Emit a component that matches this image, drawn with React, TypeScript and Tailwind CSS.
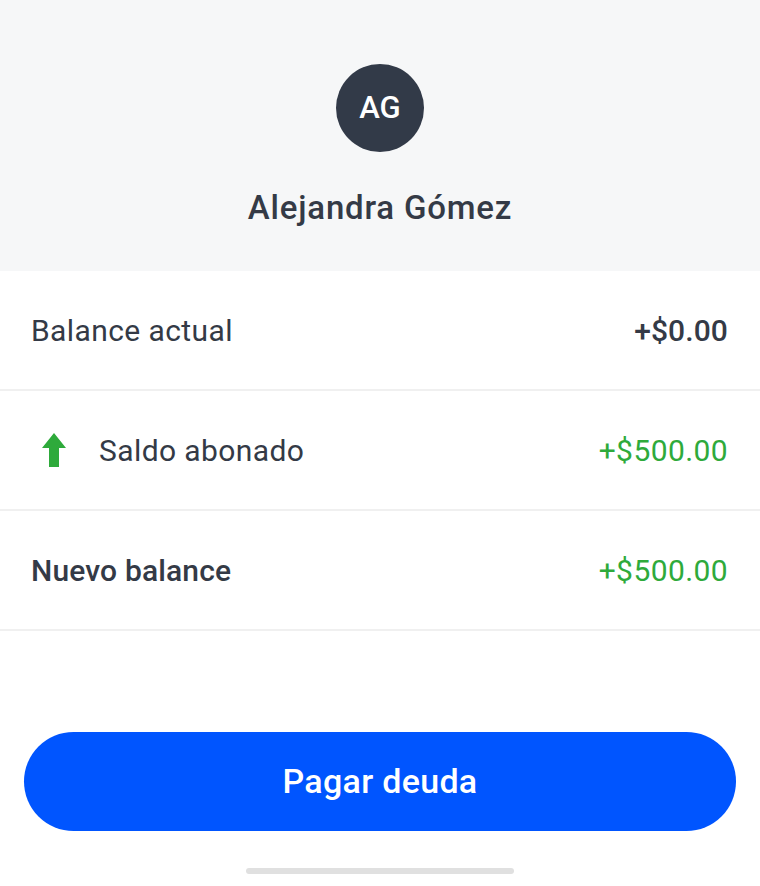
import React from 'react';

const rows = [
  { label: 'Balance actual', value: '+$0.00', bold: false, green: false, icon: false },
  { label: 'Saldo abonado', value: '+$500.00', bold: false, green: true, icon: true },
  { label: 'Nuevo balance', value: '+$500.00', bold: true, green: true, icon: false },
];

const ArrowUp = () => (
  <svg width="26" height="34" viewBox="0 0 26 34" className="shrink-0 ml-[10px]">
    <polygon points="13,0 25,15 18,15 18,34 8,34 8,15 1,15" fill="#2eaa3b" />
  </svg>
);

export default function App() {
  return (
    <div className="w-[760px] h-[886px] bg-white flex flex-col font-['Roboto',sans-serif] text-[#343a46]">
      <div className="h-[271px] bg-[#f6f7f8] flex flex-col items-center pt-[64px]">
        <div className="w-[88px] h-[88px] rounded-full bg-[#323a48] flex items-center justify-center text-white text-[31px] font-medium">
          AG
        </div>
        <div className="mt-[39px] text-[33px] tracking-[0.8px] font-medium leading-none">Alejandra Gómez</div>
      </div>

      {rows.map((r) => (
        <div
          key={r.label}
          className="h-[120px] flex items-center justify-between pl-[31px] pr-[32px] border-b-2 border-[#f0f0f0]"
        >
          <div className="flex items-center gap-[32px]">
            {r.icon && <ArrowUp />}
            <span className={`text-[30px] ${r.bold ? 'font-medium tracking-[0.15px]' : 'font-normal tracking-[0.4px]'}`}>
              {r.label}
            </span>
          </div>
          <span
            className={`text-[30px] ${r.green ? 'text-[#2eaa3b] tracking-[0.4px]' : 'text-[#343a46] font-medium tracking-[0.1px]'}`}
          >
            {r.value}
          </span>
        </div>
      ))}

      <div className="flex-1" />

      <div className="px-[24px]">
        <button className="w-full h-[99px] rounded-full bg-[#0055ff] text-white text-[34px] tracking-[0.3px] font-medium">
          Pagar deuda
        </button>
      </div>
      <div className="h-[55px] flex justify-center pt-[37px]">
        <div className="w-[268px] h-[6px] rounded-full bg-[#e0e0e0]" />
      </div>
    </div>
  );
}
